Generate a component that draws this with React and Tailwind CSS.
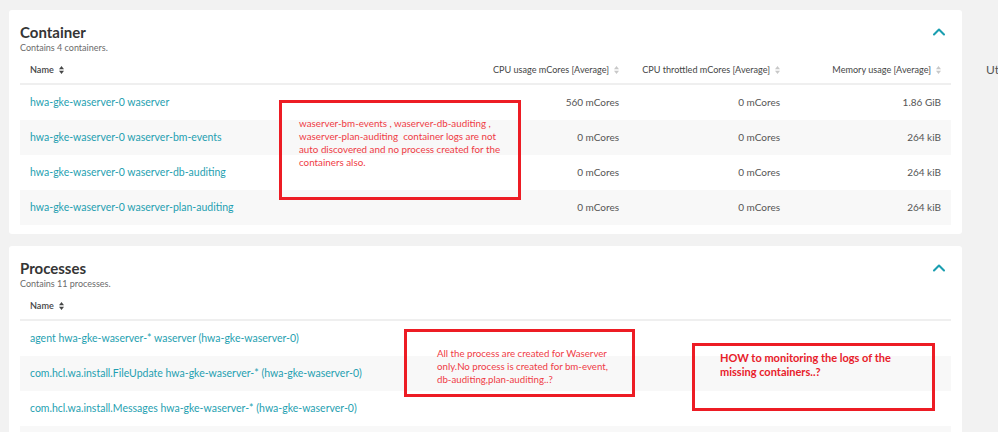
import React from 'react';
import { ChevronUp } from 'lucide-react';

const containers = [
  { name: 'hwa-gke-waserver-0 waserver', cpu: '560 mCores', throttled: '0 mCores', mem: '1.86 GiB' },
  { name: 'hwa-gke-waserver-0 waserver-bm-events', cpu: '0 mCores', throttled: '0 mCores', mem: '264 kiB' },
  { name: 'hwa-gke-waserver-0 waserver-db-auditing', cpu: '0 mCores', throttled: '0 mCores', mem: '264 kiB' },
  { name: 'hwa-gke-waserver-0 waserver-plan-auditing', cpu: '0 mCores', throttled: '0 mCores', mem: '264 kiB' },
];

const processes = [
  'agent hwa-gke-waserver-* waserver (hwa-gke-waserver-0)',
  'com.hcl.wa.install.FileUpdate hwa-gke-waserver-* (hwa-gke-waserver-0)',
  'com.hcl.wa.install.Messages hwa-gke-waserver-* (hwa-gke-waserver-0)',
  'com.hcl.wa.install.Watchdog hwa-gke-waserver-* (hwa-gke-waserver-0)',
];

const SortIcon = ({ light }) => (
  <svg width="5" height="8" viewBox="0 0 5 8" className="shrink-0">
    <polygon points="0,3.3 2.5,0 5,3.3" fill={light ? '#c8c8c8' : '#454646'} />
    <polygon points="0,4.7 2.5,8 5,4.7" fill={light ? '#c8c8c8' : '#454646'} />
  </svg>
);

const CardHead = ({ title, subtitle }) => (
  <div>
    <div className="flex items-center justify-between h-[20px]">
      <h2 className="text-[15px] leading-[20px] font-bold text-[#353535]">{title}</h2>
      <ChevronUp size={20} strokeWidth={2.5} className="text-[#1a9eb0] mr-[2px]" />
    </div>
    <div className="text-[9px] leading-[12px] text-[#6b6b6b]">{subtitle}</div>
  </div>
);

const NumHead = ({ label }) => (
  <div className="flex items-center justify-end gap-[5px] px-[10px] whitespace-nowrap">
    <span>{label}</span>
    <SortIcon light />
  </div>
);

const App = () => {
  return (
    <div className="relative w-[998px] h-[432px] overflow-hidden bg-[#f2f2f2] flex font-['Lato',sans-serif]">
      <div className="w-[953px] ml-[9px] pt-[10px] flex flex-col gap-[12px] shrink-0">
        {/* containers */}
        <div className="bg-white rounded-[3px] px-[11px] pt-[12px] pb-[9px]">
          <CardHead title="Container" subtitle="Contains 4 containers." />
          <div className="grid grid-cols-[448px_161px_161px_161px] pt-[10px] pb-[7px] border-b-2 border-[#efefef] text-[9.1px] leading-[12px] text-[#454646]">
            <div className="flex items-center gap-[5px] px-[10px]">
              <span className="font-semibold">Name</span>
              <SortIcon />
            </div>
            <NumHead label="CPU usage mCores [Average]" />
            <NumHead label="CPU throttled mCores [Average]" />
            <NumHead label="Memory usage [Average]" />
          </div>
          {containers.map((c, i) => (
            <div
              key={c.name}
              className={`grid grid-cols-[448px_161px_161px_161px] h-[35px] items-center text-[10px] ${i % 2 ? 'bg-[#f8f8f8]' : 'bg-white'}`}
            >
              <div className="px-[10px] text-[#1f9fb1] text-[10.5px]">{c.name}</div>
              <div className="px-[10px] text-right text-[#555]">{c.cpu}</div>
              <div className="px-[10px] text-right text-[#555]">{c.throttled}</div>
              <div className="px-[10px] text-right text-[#555]">{c.mem}</div>
            </div>
          ))}
        </div>

        {/* processes */}
        <div className="bg-white rounded-[3px] px-[11px] pt-[12px] flex-1">
          <CardHead title="Processes" subtitle="Contains 11 processes." />
          <div className="flex items-center gap-[5px] px-[10px] pt-[10px] pb-[7px] border-b-2 border-[#efefef] text-[9.1px] leading-[12px] text-[#454646]">
            <span className="font-semibold">Name</span>
            <SortIcon />
          </div>
          {processes.map((p, i) => (
            <div
              key={i}
              className={`h-[35px] flex items-center px-[10px] text-[10.5px] text-[#1f9fb1] ${i % 2 ? 'bg-[#f8f8f8]' : 'bg-white'}`}
            >
              {p}
            </div>
          ))}
        </div>
      </div>

      <div className="ml-[24px] pt-[63px] text-[12px] leading-[14px] text-[#555] whitespace-nowrap">Utilization</div>

      {/* annotations */}
      <div className="absolute left-[279px] top-[100px] w-[242px] h-[100px] border-[3px] border-[#ed1c24] pl-[17px] pt-[14px] text-[9.8px] leading-[13px] text-[#ef3b45]">
        waserver-bm-events , waserver-db-auditing ,<br />
        waserver-plan-auditing&nbsp; container logs are not<br />
        auto discovered and no process created for the<br />
        containers also.
      </div>
      <div className="absolute left-[404px] top-[329px] w-[231px] h-[68px] border-[3px] border-[#ed1c24] pl-[30px] pt-[15px] text-[9.7px] leading-[13px] text-[#ef3b45]">
        All the process are created for Waserver<br />
        only.No process is created for bm-event,<br />
        db-auditing,plan-auditing..?
      </div>
      <div className="absolute left-[692px] top-[343px] w-[243px] h-[68px] border-[3px] border-[#ed1c24] pl-[25px] pt-[5px] text-[11px] leading-[14px] font-bold text-[#e8202a]">
        HOW to monitoring the logs of the<br />
        missing containers..?
      </div>
    </div>
  );
};

export default App;
